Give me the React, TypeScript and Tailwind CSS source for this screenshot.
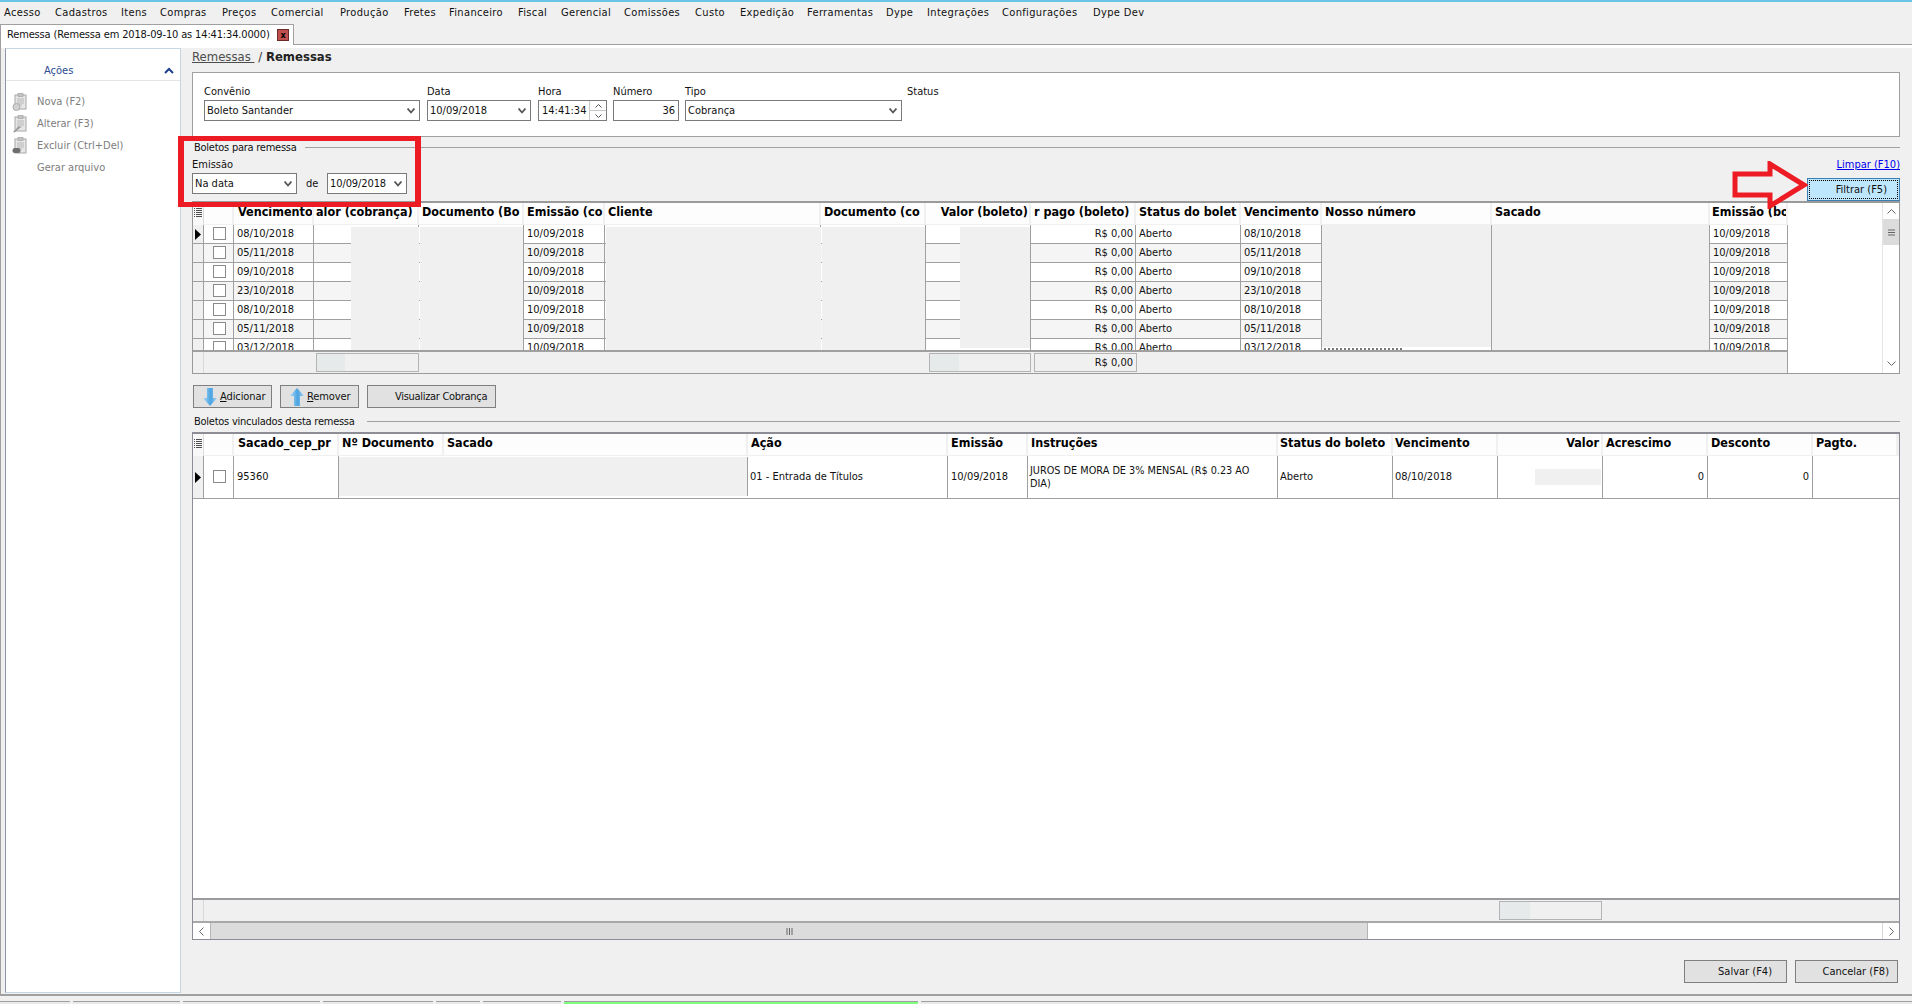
import React from "react";

const MENU = ["Acesso","Cadastros","Itens","Compras","Preços","Comercial","Produção","Fretes","Financeiro","Fiscal","Gerencial","Comissões","Custo","Expedição","Ferramentas","Dype","Integrações","Configurações","Dype Dev"];

const TOP_COLS = "grid-cols-[11px_30px_80px_105px_105px_81px_216px_105px_105px_105px_105px_81px_170px_218px_78px]";
const LOW_COLS = "grid-cols-[11px_30px_105px_105px_304px_200px_80px_250px_115px_105px_105px_105px_105px_85px]";

const TOP_HEAD: [string, string][] = [
  ["", ""], ["", ""], ["Vencimento", "pl-[4px]"], ["alor (cobrança)", "pl-[2px]"], ["Documento (Bo", "pl-[3px]"], ["Emissão (co", "pl-[3px]"], ["Cliente", "pl-[3px]"], ["Documento (co", "pl-[3px]"], ["Valor (boleto)", "justify-end pr-[1px]"], ["r pago (boleto)", "pl-[3px]"], ["Status do bolet", "pl-[3px]"], ["Vencimento", "pl-[3px]"], ["Nosso número", "pl-[3px]"], ["Sacado", "pl-[3px]"], ["Emissão (bo", "pl-[2px]"],
];
const LOW_HEAD: [string, string][] = [
  ["", ""], ["", ""], ["Sacado_cep_pr", "pl-[4px]"], ["Nº Documento", "pl-[3px]"], ["Sacado", "pl-[3px]"], ["Ação", "pl-[3px]"], ["Emissão", "pl-[3px]"], ["Instruções", "pl-[3px]"], ["Status do boleto", "pl-[2px]"], ["Vencimento", "pl-[2px]"], ["Valor", "justify-end pr-[2px]"], ["Acrescimo", "pl-[3px]"], ["Desconto", "pl-[3px]"], ["Pagto.", "pl-[3px]"],
];

const VENC = ["08/10/2018","05/11/2018","09/10/2018","23/10/2018","08/10/2018","05/11/2018","03/12/2018"];

function Chevron() {
  return (
    <svg width="8" height="6" viewBox="0 0 8 6" className="shrink-0">
      <path d="M0.5 0.5 L4 4.5 L7.5 0.5" fill="none" stroke="#555" strokeWidth="1.8" />
    </svg>
  );
}

function Select({ text, className }: { text: string; className: string }) {
  return (
    <div className={`flex items-center justify-between h-[21px] border border-[#7a7a7a] bg-white pl-[2px] pr-[4px] ${className}`}>
      <span>{text}</span>
      <Chevron />
    </div>
  );
}

function Check() {
  return <div className="w-[13px] h-[13px] border border-[#8a8a8a] bg-white translate-x-[1px] -translate-y-[1px]" />;
}

function ListIcon() {
  return (
    <svg width="8" height="9" viewBox="0 0 8 9">
      <path d="M0 0.5h1M2 0.5h6M0 2.5h1M2 2.5h6M0 4.5h1M2 4.5h6M0 6.5h1M2 6.5h6M0 8.5h1M2 8.5h6" stroke="#222" strokeWidth="0.8" />
    </svg>
  );
}

function RowArrow() {
  return (
    <svg width="6" height="11" viewBox="0 0 6 11">
      <path d="M0 0 L6 5.5 L0 11 Z" fill="#000" />
    </svg>
  );
}

function DocIcon({ kind }: { kind: "add" | "edit" | "del" }) {
  return (
    <svg width="16" height="18" viewBox="0 0 16 18" className="shrink-0">
      <rect x="3" y="2" width="11" height="14" fill="#e6e6e6" stroke="#a8a8a8" />
      <rect x="6" y="0.5" width="5" height="3" fill="#c4c4c4" stroke="#9a9a9a" strokeWidth="0.6" />
      <path d="M5 6h7M5 8h7M5 10h7M5 12h5" stroke="#b8b8b8" strokeWidth="1" />
      {kind === "add" && <circle cx="4.5" cy="14" r="3.5" fill="#d2d2d2" stroke="#adadad" />}
      {kind === "edit" && <path d="M1 17 L7 11 L8.5 12.5 L2.5 17.5 Z" fill="#9a9a9a" />}
      {kind === "del" && <rect x="0.5" y="11" width="8" height="5" rx="2.5" fill="#6e6e6e" />}
    </svg>
  );
}

function BlueArrow({ up }: { up?: boolean }) {
  return (
    <svg width="14" height="18" viewBox="0 0 14 18" className="shrink-0">
      <defs>
        <linearGradient id={up ? "ua" : "da"} x1="0" x2="1" y1="0" y2="0">
          <stop offset="0" stopColor="#a9daf6" />
          <stop offset="0.55" stopColor="#4aa3e0" />
          <stop offset="1" stopColor="#9fd2f2" />
        </linearGradient>
      </defs>
      <path
        d={up ? "M7 0 L14 8 L10 8 L10 18 L4 18 L4 8 L0 8 Z" : "M4 0 L10 0 L10 10 L14 10 L7 18 L0 10 L4 10 Z"}
        fill={`url(#${up ? "ua" : "da"})`}
      />
    </svg>
  );
}

function GridHead({ cols, cells }: { cols: string; cells: [string, string][] }) {
  return (
    <div className={`grid ${cols} h-[22px] bg-[#f0f0f0] gap-x-0`}>
      {cells.map(([t, c], i) =>
        i === 0 ? (
          <div key={i} className="flex items-center justify-center pb-[3px] bg-[#f8f8f8] border-r border-[#dcdcdc]"><ListIcon /></div>
        ) : (
          <div key={i} className={`flex items-center pb-[3px] border-b border-[#f0f0f0] overflow-hidden whitespace-nowrap bg-[#fdfdfd] border-r-2 border-r-[#f0f0f0] font-bold text-[12.5px] text-black ${c}`}>{t}</div>
        )
      )}
    </div>
  );
}

function TopRow({ i, date }: { i: number; date: string }) {
  const bg = i % 2 ? "bg-[#f5f5f5]" : "bg-white";
  const cell = `flex items-center overflow-hidden whitespace-nowrap border-r border-b border-[#a0a0a0] pl-[3px] ${bg}`;
  return (
    <div className={`grid ${TOP_COLS} h-[19px]`}>
      <div className="flex items-center justify-center bg-[#f0f0f0] border-r border-b border-[#a0a0a0]">{i === 0 && <RowArrow />}</div>
      <div className={`flex items-center justify-center border-r border-b border-[#a0a0a0] ${bg}`}><Check /></div>
      <div className={cell}>{date}</div>
      <div className={cell} />
      <div className={cell} />
      <div className={cell}>10/09/2018</div>
      <div className={cell} />
      <div className={cell} />
      <div className={cell} />
      <div className={`${cell} justify-end pr-[2px]`}>R$ 0,00</div>
      <div className={cell}>Aberto</div>
      <div className={cell}>{date}</div>
      <div className={cell} />
      <div className={cell} />
      <div className={cell}>10/09/2018</div>
    </div>
  );
}

function Btn({ className, children }: { className: string; children: React.ReactNode }) {
  return <div className={`flex items-center h-[23px] border border-[#7f7f7f] bg-[#e1e1e1] ${className}`}>{children}</div>;
}

function SumBox({ className, children }: { className: string; children?: React.ReactNode }) {
  return (
    <div className={`relative h-[19px] border border-[#b4b4b4] bg-[#f0f0f0] flex items-center justify-end pr-[3px] ${className}`}>
      {children}
    </div>
  );
}

export default function App() {
  return (
    <div className="w-[1912px] h-[1004px] overflow-hidden bg-[#f0f0f0] text-[11px] leading-[14px] text-[#111] font-['DejaVu_Sans_Condensed','DejaVu_Sans',sans-serif] [font-stretch:condensed] relative">
      <div className="h-[2px] bg-[#67c6e8]" />
      <div className="h-[22px] grid grid-cols-[51px_66px_39px_62px_49px_69px_64px_45px_69px_43px_63px_71px_45px_67px_79px_41px_75px_91px_80px] pl-[4px] items-center pb-[1px] tracking-[0.35px]">
        {MENU.map((m) => <span key={m} className="whitespace-nowrap">{m}</span>)}
      </div>

      <div className="h-[21px] border-b border-[#a0a0a0] relative">
        <div className="absolute left-0 top-0 w-[294px] h-[21px] bg-white border-t border-r border-l border-[#a0a0a0] flex items-center pl-[6px] pr-[4px] justify-between">
          <span className="whitespace-nowrap tracking-[-0.15px]">Remessa (Remessa em 2018-09-10 as 14:41:34.0000)</span>
          <div className="w-[12px] h-[12px] bg-[#c0504d] border border-[#6b2b2b] flex items-center justify-center text-[9px] leading-none text-black font-bold">x</div>
        </div>
      </div>

      <div className="h-[951px] border-l border-b-2 border-[#a0a0a0] flex flex-col">
        <div className="h-[3px] bg-white" />
        <div className="flex flex-1">
          <aside className="ml-[4px] w-[176px] h-[945px] bg-white border border-[#c6d5e2] border-l-[#8d96a6] shrink-0">
            <div className="h-[32px] flex items-center justify-between pl-[38px] pr-[6px] pt-[12px] border-b border-[#e4e4e4]">
              <span className="text-[#2a4a94]">Ações</span>
              <svg width="10" height="7" viewBox="0 0 10 7"><path d="M1 6 L5 2 L9 6" fill="none" stroke="#1d3f8f" strokeWidth="2" /></svg>
            </div>
            <div className="flex flex-col gap-[8px] pt-[14px] pl-[6px] text-[#7d7d7d]">
              <div className="flex items-center gap-[9px] h-[14px]"><DocIcon kind="add" /><span>Nova (F2)</span></div>
              <div className="flex items-center gap-[9px] h-[14px]"><DocIcon kind="edit" /><span>Alterar (F3)</span></div>
              <div className="flex items-center gap-[9px] h-[14px]"><DocIcon kind="del" /><span>Excluir (Ctrl+Del)</span></div>
              <div className="flex items-center h-[14px] pl-[25px]"><span>Gerar arquivo</span></div>
            </div>
          </aside>

          <main className="ml-[11px] w-[1708px] flex flex-col">
            <div className="h-[24px] flex items-start pt-[1px] text-[13px] leading-[16px]">
              <span className="underline text-[#4d4d4d] whitespace-pre">Remessas </span>
              <span className="text-[#333] whitespace-pre"> / </span>
              <span className="font-bold text-[#222]">Remessas</span>
            </div>

            <div className="h-[65px] bg-white border border-[#a0a0a0] flex pl-[11px] pt-[11px]">
              <div className="w-[216px] mr-[7px]"><div className="h-[16px] pt-[1px]">Convênio</div><Select text="Boleto Santander" className="w-[216px]" /></div>
              <div className="w-[104px] mr-[7px]"><div className="h-[16px] pt-[1px]">Data</div><Select text="10/09/2018" className="w-[104px] pl-[2px]" /></div>
              <div className="w-[69px] mr-[6px]">
                <div className="h-[16px] pt-[1px]">Hora</div>
                <div className="flex items-center h-[21px] border border-[#7a7a7a] bg-white pl-[3px]">
                  <span className="flex-1">14:41:34</span>
                  <div className="w-[17px] h-[19px] flex flex-col border-l border-[#c8c8c8]">
                    <div className="flex-1 flex items-center justify-center border-b border-[#c8c8c8]"><svg width="7" height="4" viewBox="0 0 7 4"><path d="M0.5 3.5 L3.5 0.5 L6.5 3.5" fill="none" stroke="#555" /></svg></div>
                    <div className="flex-1 flex items-center justify-center"><svg width="7" height="4" viewBox="0 0 7 4"><path d="M0.5 0.5 L3.5 3.5 L6.5 0.5" fill="none" stroke="#555" /></svg></div>
                  </div>
                </div>
              </div>
              <div className="w-[66px] mr-[6px]"><div className="h-[16px] pt-[1px]">Número</div><div className="h-[21px] border border-[#7a7a7a] bg-white flex items-center justify-end pr-[3px]">36</div></div>
              <div className="w-[217px] mr-[5px]"><div className="h-[16px] pt-[1px]">Tipo</div><Select text="Cobrança" className="w-[217px]" /></div>
              <div><div className="h-[16px] pt-[1px]">Status</div></div>
            </div>

            <div className="h-[64px] flex flex-col">
              <div className="h-[18px] pt-[4px] flex items-center pl-[2px] gap-[8px]">
                <span className="whitespace-nowrap tracking-[-0.25px]">Boletos para remessa</span>
                <div className="flex-1 h-px bg-[#a0a0a0] -translate-y-[1px]" />
              </div>
              <div className="flex-1 flex justify-between">
                <div>
                  <div className="h-[16px] pt-[3px]">Emissão</div>
                  <div className="flex items-center mt-[2px]">
                    <Select text="Na data" className="w-[105px]" />
                    <span className="ml-[9px] w-[21px]">de</span>
                    <Select text="10/09/2018" className="w-[80px] pl-[2px] tracking-[-0.1px]" />
                  </div>
                </div>
                <div className="flex flex-col items-end">
                  <div className="h-[16px] pt-[3px] underline text-[#0000ee]">Limpar (F10)</div>
                  <div className="mt-[7px] w-[93px] h-[23px] bg-[#bee6fd] border border-[#3c7fb1] p-[1px]">
                    <div className="w-full h-full border border-dotted border-black flex items-center justify-end pr-[10px]">Filtrar (F5)</div>
                  </div>
                </div>
              </div>
            </div>

            <div className="h-[173px] border border-t-2 border-[#9a9a9a] flex bg-white overflow-hidden">
              <div className="w-[1595px] flex flex-col border-r border-[#a0a0a0]">
                <GridHead cols={TOP_COLS} cells={TOP_HEAD} />
                <div className="h-[125px] overflow-hidden relative">
                  {VENC.map((d, i) => <TopRow key={i} i={i} date={d} />)}
                  <div className="absolute left-[158px] top-[2px] w-[68px] h-[123px] bg-[#f0f0f0]" />
                  <div className="absolute left-[227px] top-[2px] w-[103px] h-[123px] bg-[#f0f0f0]" />
                  <div className="absolute left-[413px] top-[2px] w-[215px] h-[123px] bg-[#f0f0f0]" />
                  <div className="absolute left-[629px] top-[2px] w-[103px] h-[123px] bg-[#f0f0f0]" />
                  <div className="absolute left-[767px] top-[2px] w-[70px] h-[121px] bg-[#f0f0f0]" />
                  <div className="absolute left-[1129px] top-0 w-[169px] h-[122px] bg-[#f0f0f0]" />
                  <div className="absolute left-[1131px] top-[123px] w-[78px] border-t-2 border-dotted border-[#777]" />
                  <div className="absolute left-[1299px] top-0 w-[217px] h-[125px] bg-[#f0f0f0]" />
                </div>
                <div className="flex-1 border-t-2 border-[#a0a0a0] bg-[#f0f0f0] flex items-center">
                  <div className="w-[11px] h-full border-r border-[#d8d8d8] shrink-0" />
                  <div className="w-[112px] shrink-0" />
                  <SumBox className="w-[103px]"><div className="absolute left-0 top-0 w-[28px] h-full bg-[#e6eaea]" /></SumBox>
                  <div className="w-[510px] shrink-0" />
                  <SumBox className="w-[102px]"><div className="absolute left-0 top-0 w-[29px] h-full bg-[#e6eaea]" /></SumBox>
                  <SumBox className="w-[103px] ml-[3px] bg-[#e6eaea]">R$ 0,00</SumBox>
                </div>
              </div>
              <div className="flex-1" />
              <div className="w-[17px] flex flex-col bg-white border-l border-[#e4e4e4]">
                <div className="h-[16px] flex items-center justify-center"><svg width="9" height="5" viewBox="0 0 9 5"><path d="M0.5 4.5 L4.5 0.5 L8.5 4.5" fill="none" stroke="#666" /></svg></div>
                <div className="h-[26px] bg-[#dcdcdc] flex items-center justify-center"><svg width="7" height="7" viewBox="0 0 7 7"><path d="M0 1h7M0 3.5h7M0 6h7" stroke="#666" /></svg></div>
                <div className="flex-1" />
                <div className="h-[20px] flex items-center justify-center"><svg width="9" height="5" viewBox="0 0 9 5"><path d="M0.5 0.5 L4.5 4.5 L8.5 0.5" fill="none" stroke="#666" /></svg></div>
              </div>
            </div>

            <div className="flex mt-[11px] pl-[1px] gap-[8px]">
              <Btn className="w-[79px] pl-[9px] gap-[3px] tracking-[-0.1px]"><BlueArrow /><span><u>A</u>dicionar</span></Btn>
              <Btn className="w-[79px] pl-[9px] gap-[3px] tracking-[-0.1px]"><BlueArrow up /><span><u>R</u>emover</span></Btn>
              <Btn className="w-[129px] pl-[27px] tracking-[-0.3px]"><span>Visualizar Cobrança</span></Btn>
            </div>

            <div className="h-[14px] mt-[7px] flex items-center pl-[2px] gap-[12px]">
              <span className="whitespace-nowrap tracking-[-0.25px]">Boletos vinculados desta remessa</span>
              <div className="flex-1 h-px bg-[#a0a0a0] -translate-y-[1px]" />
            </div>

            <div className="h-[508px] mt-[3px] border border-t-2 border-[#8d8d96] flex flex-col bg-white overflow-hidden">
              <GridHead cols={LOW_COLS} cells={LOW_HEAD} />
              <div className={`grid ${LOW_COLS} h-[43px] border-b border-[#a0a0a0] relative`}>
                <div className="flex items-center justify-center bg-[#f0f0f0] border-r border-[#a0a0a0]"><RowArrow /></div>
                <div className="flex items-center justify-center border-r border-[#a0a0a0]"><Check /></div>
                <div className="flex items-center pl-[3px] border-r border-[#a0a0a0]">95360</div>
                <div className="bg-[#f0f0f0] my-[1px] mb-[2px]" />
                <div className="bg-[#f0f0f0] my-[1px] mb-[2px] border-r border-[#a0a0a0]" />
                <div className="flex items-center pl-[2px] border-r border-[#a0a0a0]">01 - Entrada de Títulos</div>
                <div className="flex items-center pl-[3px] border-r border-[#a0a0a0]">10/09/2018</div>
                <div className="flex items-center pl-[2px] pr-[18px] border-r border-[#a0a0a0] text-[10.8px] leading-[13px]">JUROS DE MORA DE 3% MENSAL (R$ 0.23 AO DIA)</div>
                <div className="flex items-center pl-[2px] border-r border-[#a0a0a0]">Aberto</div>
                <div className="flex items-center pl-[2px] border-r border-[#a0a0a0]">08/10/2018</div>
                <div className="flex items-center justify-end pr-[1px] border-r border-[#a0a0a0]"><div className="w-[66px] h-[16px] bg-[#f0f0f0]" /></div>
                <div className="flex items-center justify-end pr-[3px] border-r border-[#a0a0a0]">0</div>
                <div className="flex items-center justify-end pr-[3px] border-r border-[#a0a0a0]">0</div>
                <div />
              </div>
              <div className="flex-1" />
              <div className="h-[23px] border-t-2 border-[#9a9a9f] bg-[#f0f0f0] flex items-center">
                <div className="w-[11px] h-full border-r border-[#d8d8d8] shrink-0" />
                <div className="w-[1295px] shrink-0" />
                <SumBox className="w-[103px]"><div className="absolute left-0 top-0 w-[30px] h-full bg-[#e6eaea]" /></SumBox>
              </div>
              <div className="h-[18px] border-t-2 border-[#a8a8a8] flex bg-white">
                <div className="w-[18px] flex items-center justify-center border-r border-[#b5b5b5]"><svg width="5" height="9" viewBox="0 0 5 9"><path d="M4.5 0.5 L0.5 4.5 L4.5 8.5" fill="none" stroke="#666" /></svg></div>
                <div className="w-[1157px] bg-[#dcdcdc] flex items-center justify-center border-r border-[#b5b5b5]"><svg width="7" height="7" viewBox="0 0 7 7"><path d="M1 0v7M3.5 0v7M6 0v7" stroke="#666" /></svg></div>
                <div className="flex-1" />
                <div className="w-[17px] flex items-center justify-center border-l border-[#d8d8d8]"><svg width="5" height="9" viewBox="0 0 5 9"><path d="M0.5 0.5 L4.5 4.5 L0.5 8.5" fill="none" stroke="#666" /></svg></div>
              </div>
            </div>

            <div className="flex justify-end gap-[8px] mt-[20px] pr-[2px]">
              <Btn className="w-[103px] justify-end pr-[14px] bg-[#dcdcdc]"><span>Salvar (F4)</span></Btn>
              <Btn className="w-[103px] justify-end pr-[8px] bg-[#dcdcdc]"><span>Cancelar (F8)</span></Btn>
            </div>
          </main>
        </div>
      </div>

      <div className="h-[5px] bg-[#f0f0f0]" />
      <div className="h-[3px] flex gap-[3px] bg-[#f0f0f0]">
        <div className="w-[70px] bg-[#e9e9e9] border-t border-[#a0a0a0]" />
        <div className="w-[107px] bg-[#e9e9e9] border-t border-[#a0a0a0]" />
        <div className="w-[137px] bg-[#e9e9e9] border-t border-[#a0a0a0]" />
        <div className="w-[110px] bg-[#e9e9e9] border-t border-[#a0a0a0]" />
        <div className="w-[44px] bg-[#e9e9e9] border-t border-[#a0a0a0]" />
        <div className="w-[78px] bg-[#e9e9e9] border-t border-[#a0a0a0]" />
        <div className="w-[354px] bg-[#7fff7f] border-t border-[#a0a0a0]" />
        <div className="flex-1 bg-[#e9e9e9] border-t border-[#a0a0a0]" />
      </div>

      {/* annotation marks drawn over the screenshot */}
      <div className="absolute left-[178px] top-[136px] w-[243px] h-[71px] border-x-[6px] border-y-[5px] border-[#ed1c24]" />
      <svg className="absolute left-[1732px] top-[161px]" width="76" height="48" viewBox="0 0 76 48">
        <path d="M3 13 H38 V3 L72 24 L38 45 V34 H3 Z" fill="none" stroke="#ed1c24" strokeWidth="5" />
      </svg>
    </div>
  );
}
